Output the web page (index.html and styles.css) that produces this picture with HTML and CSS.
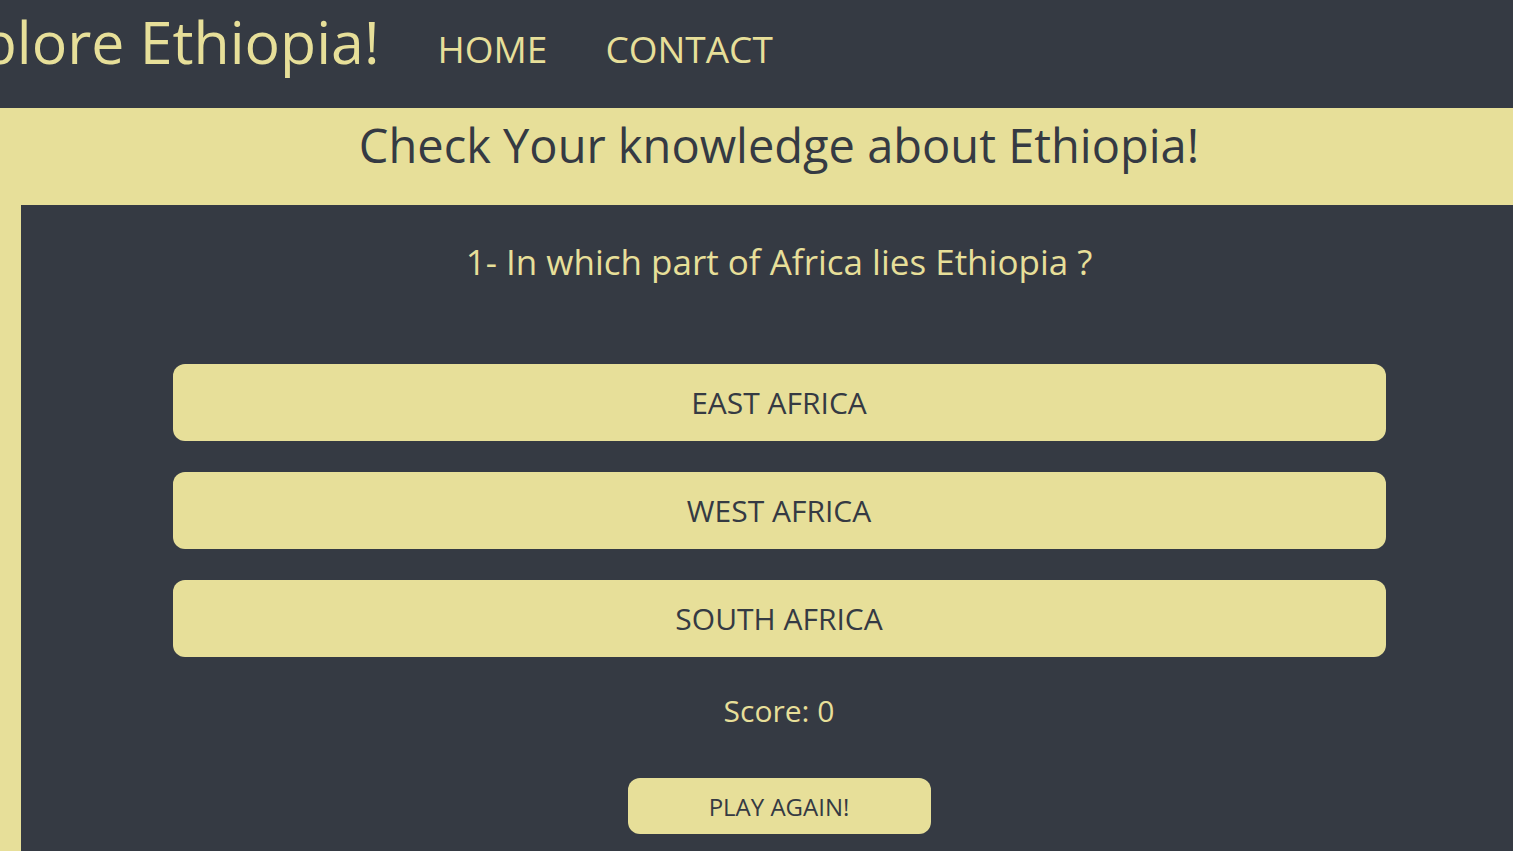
FILE: index.html
```html
<!DOCTYPE html>
<html lang="en">
<head>
<meta charset="utf-8">
<title>Explore Ethiopia!</title>
<link rel="stylesheet" href="styles.css">
</head>
<body>
<div class="page">
  <header class="topbar">
    <h1 class="brand">Explore Ethiopia!</h1>
    <nav class="nav">
      <a class="nav-link" href="#">HOME</a>
      <a class="nav-link" href="#">CONTACT</a>
    </nav>
  </header>
  <main class="main">
    <h2 class="main-title">Check Your knowledge about Ethiopia!</h2>
    <section class="quiz">
      <p class="question">1- In which part of Africa lies Ethiopia ?</p>
      <div class="options">
        <button class="option">EAST AFRICA</button>
        <button class="option">WEST AFRICA</button>
        <button class="option">SOUTH AFRICA</button>
      </div>
      <p class="score">Score: 0</p>
      <button class="replay">PLAY AGAIN!</button>
    </section>
  </main>
</div>
</body>
</html>
```

FILE: styles.css
```css
* { box-sizing: border-box; }
html, body { margin: 0; padding: 0; overflow: hidden; }
body {
  background: #353a43;
  font-family: "Open Sans", "Noto Sans", sans-serif;
  color: #e7df99;
  width: 1513px;
  height: 851px;
}
.page { width: 1558px; }
.topbar {
  height: 108px;
  background: #353a43;
  display: flex;
  align-items: flex-start;
}
.brand {
  margin: 12px 0 0 -83px;
  font-size: 59px;
  font-weight: 400;
  line-height: 1;
  color: #e7df99;
  white-space: nowrap;
}
.nav { display: flex; gap: 58px; margin: 30px 0 0 58px; }
.nav-link {
  color: #e7df99;
  text-decoration: none;
  font-size: 37px;
  line-height: 1;
}
.main {
  background: #e7df99;
  height: 743px;
}
.main-title {
  margin: 0;
  height: 97px;
  padding-top: 14px;
  text-align: center;
  font-size: 47px;
  line-height: 1;
  font-weight: 400;
  color: #353a43;
}
.quiz {
  margin: 0 21px;
  background: #353a43;
  height: 646px;
  display: flex;
  flex-direction: column;
  align-items: center;
}
.question {
  margin: 35px 0 0;
  font-size: 35px;
  line-height: 44px;
}
.options {
  width: 1213px;
  margin-top: 80px;
  display: flex;
  flex-direction: column;
  gap: 31px;
}
.option {
  height: 77px;
  border: none;
  border-radius: 12px;
  background: #e7df99;
  color: #353a43;
  font-family: inherit;
  font-size: 30px;
  padding: 0;
}
.score {
  margin: 32px 0 0;
  font-size: 30px;
  line-height: 44px;
}
.replay {
  margin-top: 45px;
  width: 303px;
  height: 56px;
  border: none;
  border-radius: 12px;
  background: #e7df99;
  color: #353a43;
  font-family: inherit;
  font-size: 24px;
  padding: 0;
}
```
